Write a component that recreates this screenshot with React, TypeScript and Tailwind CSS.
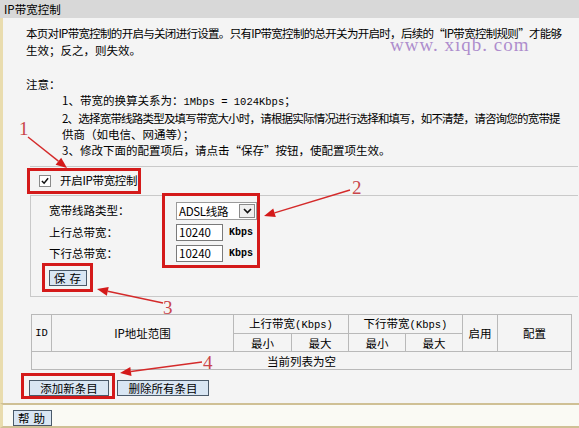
import React from 'react';

const cjk = "font-['SimSun','Noto_Sans_CJK_SC',sans-serif]";
const mono = "font-['Liberation_Mono','Courier_New',monospace]";

function Btn({ children, className = '' }: { children: React.ReactNode; className?: string }) {
  return (
    <button
      className={`h-[16px] border border-[#4a5a6a] bg-[#d9e6f3] text-[11.5px] leading-[14px] text-black ${className}`}
    >
      {children}
    </button>
  );
}

function Arrow({ x1, y1, x2, y2 }: { x1: number; y1: number; x2: number; y2: number }) {
  const a = Math.atan2(y2 - y1, x2 - x1);
  const l = 11;
  const w = 4.5;
  const bx = x2 - l * Math.cos(a);
  const by = y2 - l * Math.sin(a);
  const px = -Math.sin(a) * w;
  const py = Math.cos(a) * w;
  return (
    <g>
      <line x1={x1} y1={y1} x2={bx} y2={by} stroke="#d42a2a" strokeWidth="1.4" />
      <polygon points={`${x2},${y2} ${bx + px},${by + py} ${bx - px},${by - py}`} fill="#d41a1a" />
    </g>
  );
}

export default function App() {
  const cell = 'border border-[#b9b9b9] p-0 text-center font-normal';
  return (
    <div className={`relative w-[579px] h-[428px] overflow-hidden bg-[#f4f4f4] text-[11.5px] text-black ${cjk}`}>
      {/* title bar */}
      <div className="h-[18px] bg-[#d8d8d8] pl-[4px] leading-[18px]">IP带宽控制</div>

      <div className="h-[385px] border-l-[3px] border-[#e9dcae] pl-[23px] pt-[7px]">
        <div className="whitespace-nowrap leading-[17px]">
          <div className="tracking-[-0.7px]">
            本页对IP带宽控制的开启与关闭进行设置。只有IP带宽控制的总开关为开启时，后续的“IP带宽控制规则”才能够
          </div>
          <div>生效；反之，则失效。</div>
        </div>

        <div className="mt-[17px] whitespace-nowrap leading-[16px]">
          <div>注意：</div>
          <div className="pl-[36px]">
            <div>
              1、带宽的换算关系为：<span className={`${mono} text-[10.5px]`}>1Mbps = 1024Kbps</span>；
            </div>
            <div className="tracking-[-0.8px]">
              2、选择宽带线路类型及填写带宽大小时，请根据实际情况进行选择和填写，如不清楚，请咨询您的宽带提
            </div>
            <div>供商（如电信、网通等）；</div>
            <div>3、修改下面的配置项后，请点击“保存”按钮，使配置项生效。</div>
          </div>
        </div>

        {/* switch + settings */}
        <div className="ml-[4px] mr-[1px] mt-[8px] border-t border-[#c9c9c9]">
          <div className="flex h-[28px] items-center pl-[9px]">
            <span className="flex h-[12px] w-[12px] items-center justify-center border border-[#8a8a8a] bg-white">
              <svg width="8" height="8" viewBox="0 0 9 9">
                <path d="M1 4.5 L3.5 7 L8 1.5" fill="none" stroke="#111" strokeWidth="1.7" />
              </svg>
            </span>
            <span className="ml-[9px] tracking-[-0.3px]">开启IP带宽控制</span>
          </div>
          <div className="border-t border-b border-l border-[#c9c9c9] pl-[18px] pt-[6px] pb-[10px]">
            <div className="flex h-[18px] items-center">
              <span className="w-[127px]">宽带线路类型：</span>
              <div className="flex h-[18px] w-[81px] items-center border border-[#9a9a9a] bg-white">
                <span className="flex-1 pl-[2px] leading-[16px] tracking-[-0.3px]">ADSL线路</span>
                <span className="mr-[1px] flex h-[14px] w-[16px] items-center justify-center border border-[#8a8a8a] bg-[#f0f0f0]">
                  <svg width="9" height="6" viewBox="0 0 9 6">
                    <path d="M1 1 L4.5 4.5 L8 1" fill="none" stroke="#111" strokeWidth="1.6" />
                  </svg>
                </span>
              </div>
            </div>
            <div className="mt-[4px] flex h-[17px] items-center">
              <span className="w-[127px]">上行总带宽：</span>
              <div className="h-[17px] w-[47px] border border-[#7a7a7a] bg-white pl-[2px] leading-[15px]">10240</div>
              <span className={`ml-[6px] text-[10px] font-bold ${mono}`}>Kbps</span>
            </div>
            <div className="mt-[4px] flex h-[17px] items-center">
              <span className="w-[127px]">下行总带宽：</span>
              <div className="h-[17px] w-[47px] border border-[#7a7a7a] bg-white pl-[2px] leading-[15px]">10240</div>
              <span className={`ml-[6px] text-[10px] font-bold ${mono}`}>Kbps</span>
            </div>
            <div className="mt-[8px] flex">
              <Btn className="w-[38px] pl-[3px] tracking-[4px]">保存</Btn>
            </div>
          </div>
        </div>

        {/* rules table */}
        <table className="ml-[5px] mt-[17px] w-[540px] table-fixed border-collapse border border-[#b0b0b0] leading-[16px]">
          <colgroup>
            <col className="w-[20px]" />
            <col className="w-[182px]" />
            <col className="w-[58px]" />
            <col className="w-[57px]" />
            <col className="w-[57px]" />
            <col className="w-[57px]" />
            <col className="w-[35px]" />
            <col className="w-[74px]" />
          </colgroup>
          <thead>
            <tr className="h-[18px]">
              <th rowSpan={2} className={`${cell} ${mono} text-[10.5px]`}>ID</th>
              <th rowSpan={2} className={cell}>IP地址范围</th>
              <th colSpan={2} className={`${cell} whitespace-nowrap`}>上行带宽<span className={`${mono} text-[10.5px]`}>(Kbps)</span></th>
              <th colSpan={2} className={`${cell} whitespace-nowrap`}>下行带宽<span className={`${mono} text-[10.5px]`}>(Kbps)</span></th>
              <th rowSpan={2} className={cell}>启用</th>
              <th rowSpan={2} className={cell}>配置</th>
            </tr>
            <tr className="h-[18px]">
              <th className={cell}>最小</th>
              <th className={cell}>最大</th>
              <th className={cell}>最小</th>
              <th className={cell}>最大</th>
            </tr>
          </thead>
          <tbody>
            <tr className="h-[18px]">
              <td colSpan={8} className={cell}>当前列表为空</td>
            </tr>
          </tbody>
        </table>

        <div className="ml-[3px] mt-[10px] flex gap-[8px]">
          <Btn className="w-[80px]">添加新条目</Btn>
          <Btn className="w-[92px]">删除所有条目</Btn>
        </div>
      </div>

      {/* footer */}
      <div className="h-[25px] border-t-2 border-b-2 border-l-[3px] border-[#cfc095] border-l-[#e9dcae] bg-[#fafaf4] pl-[10px] pt-[5px]">
        <Btn className="flex w-[39px] items-center pl-[4px] tracking-[4px]">帮助</Btn>
      </div>

      {/* watermark */}
      <div className="pointer-events-none absolute left-[390px] top-[31px] font-['Liberation_Serif',serif] text-[19px] tracking-[1px] text-[#9d74c4] opacity-80">
        www. xiqb. com
      </div>

      {/* annotation boxes */}
      <div className="pointer-events-none absolute left-[27px] top-[168px] h-[26px] w-[114px] border-[3px] border-[#d41a1a]" />
      <div className="pointer-events-none absolute left-[162px] top-[193px] h-[75px] w-[98px] border-[3px] border-[#d41a1a]" />
      <div className="pointer-events-none absolute left-[42px] top-[263px] h-[29px] w-[51px] border-[3px] border-[#d41a1a]" />
      <div className="pointer-events-none absolute left-[21px] top-[373px] h-[26px] w-[94px] border-[3px] border-[#d41a1a]" />

      {/* arrows */}
      <svg className="pointer-events-none absolute left-0 top-0" width="579" height="428">
        <Arrow x1={28} y1={137} x2={67} y2={168} />
        <Arrow x1={350} y1={190} x2={264} y2={216} />
        <Arrow x1={163} y1={303} x2={97} y2={289} />
        <Arrow x1={202} y1={362} x2={120} y2={373} />
      </svg>
      <div className="pointer-events-none absolute left-[19px] top-[115px] font-['Liberation_Serif',serif] text-[19px] text-[#c9454a]">1</div>
      <div className="pointer-events-none absolute left-[352px] top-[174px] font-['Liberation_Serif',serif] text-[19px] text-[#c9454a]">2</div>
      <div className="pointer-events-none absolute left-[163px] top-[294px] font-['Liberation_Serif',serif] text-[19px] text-[#c9454a]">3</div>
      <div className="pointer-events-none absolute left-[203px] top-[349px] font-['Liberation_Serif',serif] text-[19px] text-[#c9454a]">4</div>
    </div>
  );
}
